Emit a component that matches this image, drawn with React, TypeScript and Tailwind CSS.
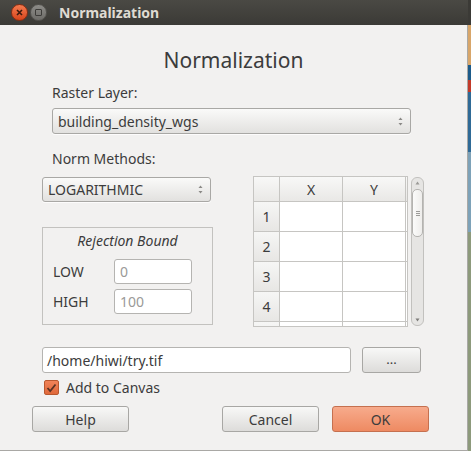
import React from "react";

const font = { fontFamily: '"Noto Sans", "Open Sans", "DejaVu Sans", sans-serif' };

function Spin() {
  return (
    <svg width="7" height="11" viewBox="0 0 7 11" className="shrink-0">
      <path d="M1.5 4 L3.5 1.5 L5.5 4 Z" fill="#8a8986" />
      <path d="M1.5 7 L3.5 9.5 L5.5 7 Z" fill="#8a8986" />
    </svg>
  );
}

function Combo({ text, className }: { text: string; className: string }) {
  return (
    <div
      className={`flex items-center justify-between rounded-[3px] border border-[#a9a8a5] bg-gradient-to-b from-[#fafaf9] to-[#e2e1df] pl-[5px] pr-[6px] text-[14px] text-[#3c3c3c] shadow-[0_1px_0_rgba(255,255,255,0.8)] ${className}`}
    >
      <span>{text}</span>
      <Spin />
    </div>
  );
}

function Btn({ label, ok }: { label: string; ok?: boolean }) {
  return (
    <div
      className={`flex h-[26px] w-[97px] items-center justify-center rounded-[3px] border text-[14px] text-[#3c3c3c] ${
        ok
          ? "border-[#c5704f] bg-gradient-to-b from-[#f7ab8c] to-[#ee8a62]"
          : "border-[#a8a7a4] bg-gradient-to-b from-[#f8f8f7] to-[#dddcda]"
      }`}
    >
      {label}
    </div>
  );
}

export default function App() {
  const rows = [1, 2, 3, 4];
  return (
    <div className="flex h-[451px] w-[471px] bg-[#2c2b28]" style={font}>
      <div className="flex w-[468px] flex-col">
        {/* title bar */}
        <div className="flex h-[25px] items-center bg-gradient-to-b from-[#4a4944] to-[#3b3a36] pl-[11px]">
          <div className="flex h-[17px] w-[17px] items-center justify-center rounded-full border border-[#8a2d12] bg-gradient-to-b from-[#f47a4e] to-[#d6441a]">
            <svg width="7" height="7" viewBox="0 0 7 7">
              <path d="M1 1 L6 6 M6 1 L1 6" stroke="#3b1a0e" strokeWidth="1.6" />
            </svg>
          </div>
          <div className="ml-[2px] flex h-[17px] w-[17px] items-center justify-center rounded-full border border-[#54534f] bg-gradient-to-b from-[#8d8c88] to-[#6d6c68]">
            <div className="h-[7px] w-[7px] rounded-[1px] border-[1.5px] border-[#3d3c39]" />
          </div>
          <span className="ml-[12px] text-[14px] font-bold text-[#dfdbd2]">Normalization</span>
        </div>
        {/* body */}
        <div className="flex flex-1 flex-col border-r border-b border-[#a9a8a5] bg-[#f2f1f0] text-[#3c3c3c]">
          <div className="mt-[21px] text-center text-[21px] leading-[28px] text-[#3c3c3c]">Normalization</div>
          <div className="mt-[9px] pl-[52px] text-[14px] leading-[20px]">Raster Layer:</div>
          <Combo text="building_density_wgs" className="ml-[52px] mt-[5px] h-[26px] w-[359px]" />
          <div className="mt-[15px] pl-[52px] text-[14px] leading-[20px]">Norm Methods:</div>
          <div className="mt-[7px] flex">
            <div className="ml-[42px] flex flex-col">
              <Combo text="LOGARITHMIC" className="mt-[1px] h-[25px] w-[169px]" />
              <div className="mt-[25px] flex h-[98px] w-[171px] flex-col border border-[#c3c2bf] pl-[10px]">
                <div className="mt-[3px] pr-[10px] text-center text-[14px] italic leading-[20px]">Rejection Bound</div>
                <div className="mt-[8px] flex items-center">
                  <span className="w-[61px] text-[14px]">LOW</span>
                  <div className="flex h-[25px] w-[78px] items-center rounded-[3px] border border-[#b5b4b1] bg-white pl-[5px] text-[14px] text-[#9b9a98]">0</div>
                </div>
                <div className="mt-[5px] flex items-center">
                  <span className="w-[61px] text-[14px]">HIGH</span>
                  <div className="flex h-[25px] w-[78px] items-center rounded-[3px] border border-[#b5b4b1] bg-white pl-[5px] text-[14px] text-[#9b9a98]">100</div>
                </div>
              </div>
            </div>
            {/* table */}
            <div className="ml-[40px] flex h-[151px] w-[155px] flex-col overflow-hidden border border-[#c6c5c2] bg-white">
              <div className="flex h-[25px] shrink-0 border-b border-[#c6c5c2] bg-gradient-to-b from-[#f8f8f7] to-[#e9e8e6] text-[14px]">
                <div className="w-[26px] border-r border-[#c6c5c2]" />
                <div className="flex w-[63px] items-center justify-center border-r border-[#c6c5c2]">X</div>
                <div className="flex w-[63px] items-center justify-center border-r border-[#c6c5c2]">Y</div>
              </div>
              {[1, 2, 3, 4, 5].map((r) => (
                <div key={r} className="flex h-[30px] shrink-0 border-b border-[#c6c5c2] text-[14px]">
                  <div className="flex w-[26px] items-center justify-center border-r border-[#c6c5c2] bg-gradient-to-b from-[#f6f6f5] to-[#e7e6e4]">
                    {rows.includes(r) ? r : ""}
                  </div>
                  <div className="w-[63px] border-r border-[#c6c5c2]" />
                  <div className="w-[63px] border-r border-[#c6c5c2]" />
                </div>
              ))}
            </div>
            {/* scrollbar */}
            <div className="ml-[3px] mt-[1px] flex h-[149px] w-[13px] flex-col items-center rounded-[6px] border border-[#c2c1be] bg-[#e6e5e3]">
              <svg width="5" height="4" viewBox="0 0 5 4" className="mt-[3px]">
                <path d="M0.5 3.5 L2.5 0.5 L4.5 3.5 Z" fill="#9a9996" />
              </svg>
              <div className="mt-[4px] flex h-[48px] w-[11px] items-center justify-center rounded-[5px] border border-[#b4b3b0] bg-gradient-to-r from-[#fbfbfa] to-[#eeedeb]">
                <div className="flex flex-col gap-[1px]">
                  <div className="h-px w-[4px] bg-[#9c9b98]" />
                  <div className="h-px w-[4px] bg-[#9c9b98]" />
                  <div className="h-px w-[4px] bg-[#9c9b98]" />
                </div>
              </div>
              <div className="flex-1" />
              <svg width="5" height="4" viewBox="0 0 5 4" className="mb-[3px]">
                <path d="M0.5 0.5 L2.5 3.5 L4.5 0.5 Z" fill="#7d7c79" />
              </svg>
            </div>
          </div>
          {/* path row */}
          <div className="mt-[20px] flex pl-[42px]">
            <div className="flex h-[26px] w-[309px] items-center rounded-[3px] border border-[#b5b4b1] bg-white pl-[4px] text-[14px]">
              /home/hiwi/try.tif
            </div>
            <div className="ml-[11px] flex h-[26px] w-[59px] items-center justify-center rounded-[3px] border border-[#a8a7a4] bg-gradient-to-b from-[#f8f8f7] to-[#dddcda] text-[13px]">
              ...
            </div>
          </div>
          <div className="mt-[4px] flex items-center pl-[44px]">
            <div className="flex h-[15px] w-[15px] items-center justify-center rounded-[2px] border border-[#b9582f] bg-gradient-to-b from-[#f08358] to-[#e0693b]">
              <svg width="11" height="10" viewBox="0 0 11 10">
                <path d="M1.5 5 L4.2 8 L9.5 1.5" stroke="#5a3324" strokeWidth="1.8" fill="none" />
              </svg>
            </div>
            <span className="ml-[7px] text-[14px]">Add to Canvas</span>
          </div>
          <div className="mt-[8px] flex pl-[32px]">
            <Btn label="Help" />
            <div className="ml-[93px]">
              <Btn label="Cancel" />
            </div>
            <div className="ml-[13px]">
              <Btn label="OK" ok />
            </div>
          </div>
        </div>
      </div>
      <div className="flex w-[3px] flex-col">
        <div className="h-[25px] bg-[#3b3a36]" />
        <div className="h-[40px] bg-[#d8a66a]" />
        <div className="h-[15px] bg-[#1d5b8a]" />
        <div className="h-[12px] bg-[#c23a2a]" />
        <div className="h-[60px] bg-[#2f6a96]" />
        <div className="h-[80px] bg-[#7ea2b8]" />
        <div className="flex-1 bg-[#8d9a7c]" />
      </div>
    </div>
  );
}
